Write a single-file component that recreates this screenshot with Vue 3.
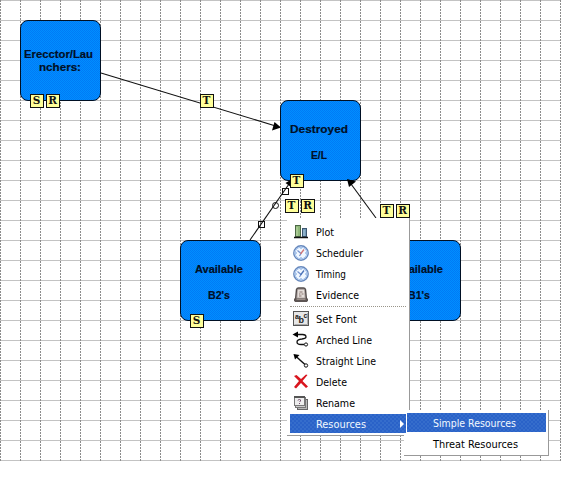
<script setup>
const gridX = Array.from({ length: 29 }, (_, i) => i * 20 + 0.5)
const gridY = Array.from({ length: 24 }, (_, i) => i * 20 + 0.5)

const nodes = [
  { x: 20, y: 20, lines: [{ t: 'Erecctor/Lau', x: 24, y: 58, w: 69 }, { t: 'nchers:', x: 39, y: 71, w: 42 }] },
  { x: 280, y: 100, lines: [{ t: 'Destroyed', x: 290, y: 133, w: 58 }, { t: 'E/L', x: 311, y: 159, w: 16 }] },
  { x: 180, y: 240, lines: [{ t: 'Available', x: 195, y: 273, w: 48 }, { t: "B2's", x: 208, y: 299, w: 22 }] },
  { x: 380, y: 240, lines: [{ t: 'Available', x: 395, y: 273, w: 48 }, { t: "B1's", x: 408, y: 299, w: 22 }] },
]

const badges = [
  { x: 30, y: 94, t: 'S' }, { x: 46, y: 94, t: 'R' },
  { x: 200, y: 94, t: 'T' }, { x: 290, y: 174, t: 'T' },
  { x: 285, y: 199, t: 'T' }, { x: 301, y: 199, t: 'R' },
  { x: 380, y: 204, t: 'T' }, { x: 396, y: 204, t: 'R' },
  { x: 190, y: 314, t: 'S' },
]

const groups = [
  [
    { label: 'Plot', icon: 'plot', w: 18 },
    { label: 'Scheduler', icon: 'clock', w: 47 },
    { label: 'Timing', icon: 'clock', w: 30 },
    { label: 'Evidence', icon: 'evidence', w: 43, low: true },
  ],
  [
    { label: 'Set Font', icon: 'font', w: 41 },
    { label: 'Arched Line', icon: 'arched', w: 56 },
    { label: 'Straight Line', icon: 'straight', w: 60 },
    { label: 'Delete', icon: 'delete', w: 31 },
    { label: 'Rename', icon: 'rename', w: 39 },
    { label: 'Resources', icon: '', w: 50, active: true },
  ],
]
const submenu = [
  { label: 'Simple Resources', w: 83, active: true },
  { label: 'Threat Resources', w: 85 },
]
</script>

<template>
  <main class="screen">
    <svg class="canvas" width="561" height="482" viewBox="0 0 561 482">
      <defs>
        <pattern id="dither" width="2" height="2" patternUnits="userSpaceOnUse">
          <rect width="2" height="2" fill="#008eff" />
          <rect width="1" height="1" fill="#007af6" />
          <rect x="1" y="1" width="1" height="1" fill="#007af6" />
        </pattern>
      </defs>
      <path v-for="y in gridY" :key="'h' + y" :d="`M0 ${y}H561`" stroke="#c3c3c3" />
      <path v-for="x in gridX" :key="'v' + x" :d="`M${x} 0V462`" stroke="#8c8c8c" stroke-dasharray="2 1" />
      <g stroke="#111" stroke-width="1.1" fill="none">
        <path d="M101 73L274 125.500" />
        <path d="M250 240L289 184" />
        <path d="M376 218L351 184" />
      </g>
      <path d="M281 127.500L272 130.500L274.500 122Z" />
      <path d="M292 179L291 187L285.500 183Z" />
      <g v-for="n in nodes" :key="n.x">
        <rect :x="n.x + 0.5" :y="n.y + 0.5" width="80" height="80" rx="7.5" fill="url(#dither)" stroke="#001024" />
        <text
          v-for="l in n.lines" :key="l.t" class="node-text" :x="l.x" :y="l.y"
          :textLength="l.w" lengthAdjust="spacingAndGlyphs"
        >{{ l.t }}</text>
      </g>
      <path d="M347 179L356 181.500L349 187Z" />
      <g fill="none" stroke="#111">
        <rect x="282.500" y="188.500" width="6" height="6" />
        <rect x="258.500" y="221.500" width="6" height="6" />
        <circle cx="275.500" cy="205.500" r="3" />
      </g>
      <g v-for="b in badges" :key="b.x + '-' + b.y">
        <rect :x="b.x + 0.5" :y="b.y + 0.5" width="13" height="13" fill="#ffff99" stroke="#111" />
        <text class="badge-text" :x="b.x + 6.500" :y="b.y + 10">{{ b.t }}</text>
      </g>
    </svg>

    <nav class="menu">
      <ul v-for="(g, i) in groups" :key="i" class="group">
        <li v-for="it in g" :key="it.label" class="item" :class="{ active: it.active, low: it.low }">
          <span class="icon">
            <svg v-if="it.icon === 'plot'" width="16" height="16" viewBox="0 0 16 16">
              <rect x="2.500" y="1.500" width="5" height="11" fill="#8fb77a" stroke="#4c6846" />
              <path d="M4 3V12" stroke="#c0dbaa" />
              <rect x="9.500" y="4.500" width="4" height="8" fill="#739bb8" stroke="#3d5770" />
              <path d="M11 6V12" stroke="#a9c8db" />
              <path d="M1 13.500H15" stroke="#111" stroke-width="1.500" />
            </svg>
            <svg v-else-if="it.icon === 'clock'" width="16" height="16" viewBox="0 0 16 16">
              <circle cx="8" cy="8" r="7.200" fill="#e1efff" stroke="#6688bd" stroke-width="1.400" />
              <circle cx="8" cy="8" r="5.800" fill="#f1f8ff" stroke="#a8c5ef" />
              <path d="M8 2.500V4M8 12V13.500M2.500 8H4M12 8H13.500" stroke="#7da2d8" />
              <path d="M4.500 5.500L8 8.500L6.500 11" fill="none" stroke="#7592ce" stroke-width="1.200" />
              <path d="M7.500 9L11 4.500" :stroke="it.label === 'Scheduler' ? '#d27474' : '#4a72b8'" stroke-width="1.300" />
            </svg>
            <svg v-else-if="it.icon === 'evidence'" width="16" height="16" viewBox="0 0 16 16">
              <path d="M2.500 13L3.500 2.500Q4 1 5.500 1H10.500Q12 1 12.500 2.500L13.500 13Z" fill="#b4aaa7" stroke="#534c4b" stroke-width="1.400" />
              <path d="M4.500 10.500L5 3H11L11.500 10.500Z" fill="#e5dfdb" />
              <path d="M6.500 5H9.500M6 7H7.500M8.500 7H10.500M6 9H8.500" stroke="#87736e" />
              <path d="M1 11.500H15V13.500L14 15H2L1 13.500Z" fill="#5d5553" />
              <path d="M3.500 12.500H12.500" stroke="#988d88" />
            </svg>
            <svg v-else-if="it.icon === 'font'" width="16" height="16" viewBox="0 0 16 16">
              <rect x="0.500" y="0.500" width="15" height="14" fill="#e7e7e7" stroke="#555" />
              <path d="M1.500 13.500H14.500V2" fill="none" stroke="#aaa" />
              <text class="abc" x="2" y="8">a</text>
              <text class="abc big" x="5.500" y="12">b</text>
              <text class="abc" x="10.500" y="7">c</text>
            </svg>
            <svg v-else-if="it.icon === 'arched'" width="16" height="16" viewBox="0 0 16 16">
              <path d="M3 2.500H9.500Q13 2.500 13 5Q13 6.500 9 7Q4 7.500 4 10Q4 12.500 8 12.500H11" fill="none" stroke="#111" stroke-width="1.300" />
              <path d="M-0.500 2.500L5 -0.500V5.500Z" />
              <circle cx="13" cy="12.500" r="1.600" fill="#fff" stroke="#111" />
            </svg>
            <svg v-else-if="it.icon === 'straight'" width="16" height="16" viewBox="0 0 16 16">
              <path d="M2.500 3L12 11.500" stroke="#111" stroke-width="1.500" />
              <path d="M0.500 1L6.500 2L2 6.500Z" />
              <circle cx="13" cy="12.500" r="1.700" fill="#fff" stroke="#111" />
            </svg>
            <svg v-else-if="it.icon === 'delete'" width="16" height="16" viewBox="0 0 16 16">
              <path d="M1 2L3.500 1L8 5L13 0.500L14.500 1L9.500 7L15 12.500L13 14L8 9L3 14.500L1 13L6 7Z" fill="#d9151e" />
            </svg>
            <svg v-else-if="it.icon === 'rename'" width="16" height="16" viewBox="0 0 16 16">
              <rect x="4.500" y="4.500" width="10" height="10" fill="#b9b9b9" stroke="#656565" />
              <rect x="2.500" y="2.500" width="10" height="10" fill="#ccc" stroke="#777" />
              <rect x="1.500" y="1.500" width="10" height="9" fill="#eee" stroke="#777" />
              <path d="M1 2H12" stroke="#555" stroke-width="2" />
              <path d="M5 5.500Q5 4.500 6.500 4.500Q8 4.500 7.500 6L6.500 7M6.500 8V9" fill="none" stroke="#744e6c" />
            </svg>
          </span>
          <svg class="label" width="84" height="16">
            <text x="0" y="12" :textLength="it.w" lengthAdjust="spacingAndGlyphs">{{ it.label }}</text>
          </svg>
          <span v-if="it.active" class="arrow"></span>
        </li>
      </ul>
    </nav>

    <nav class="submenu">
      <ul class="group">
        <li v-for="s in submenu" :key="s.label" class="item" :class="{ active: s.active }">
          <svg class="label" width="100" height="16">
            <text x="0" y="12" :textLength="s.w" lengthAdjust="spacingAndGlyphs">{{ s.label }}</text>
          </svg>
        </li>
      </ul>
    </nav>
  </main>
</template>

<style>
body { margin: 0; background: #fff; overflow: hidden; }
</style>

<style scoped>
.screen { position: relative; width: 561px; height: 482px; overflow: hidden; background: #fff; }
.canvas { display: block; }
.node-text { font: bold 11.500px "Liberation Sans", Arial, sans-serif; fill: #001026; stroke: #001026; stroke-width: 0.2px; }
.badge-text { font: bold 10.500px "DejaVu Serif", serif; text-anchor: middle; fill: #111; }
.menu, .submenu {
  position: absolute;
  box-sizing: border-box;
  background: #fff;
  border-right: 1px solid #999;
  border-bottom: 1px solid #999;
}
.menu { left: 287px; top: 218px; width: 123px; height: 218px; padding: 3px 3px 0; }
.submenu { left: 404px; top: 410px; width: 145px; height: 46px; padding: 2px 2px 0 3px; }
.group { list-style: none; margin: 0; padding: 0; }
.group + .group { border-top: 1px dotted #99958a; margin-top: 1px; padding-top: 1px; }
.item { box-sizing: border-box; display: flex; align-items: center; height: 21px; padding-left: 3px; }
.menu .item.low { padding-top: 1px; }
.icon { width: 16px; height: 16px; flex: none; margin-right: 7px; }
.icon svg, .label { display: block; overflow: visible; }
.label { flex: none; }
.label text { font: 11px "DejaVu Sans Condensed", "DejaVu Sans", sans-serif; font-stretch: condensed; fill: #000; }
.item.active {
  height: 19px;
  margin: 1px 0;
  background: conic-gradient(#2a62c8 25%, #356dcc 0 50%, #2a62c8 0 75%, #356dcc 0) 0 0 / 4px 4px;
}
/* the open item stays above the edge of its submenu */
.menu .item.active { position: relative; z-index: 2; }
.item.active .label text { fill: #f2f9ff; }
.submenu .item { padding-left: 26px; }
.arrow { width: 0; height: 0; border: 4px solid transparent; border-left-color: #fff; border-right: 0; }
.abc { font: bold 7px "Liberation Sans", sans-serif; fill: #222; }
.abc.big { font-size: 9px; }
</style>
